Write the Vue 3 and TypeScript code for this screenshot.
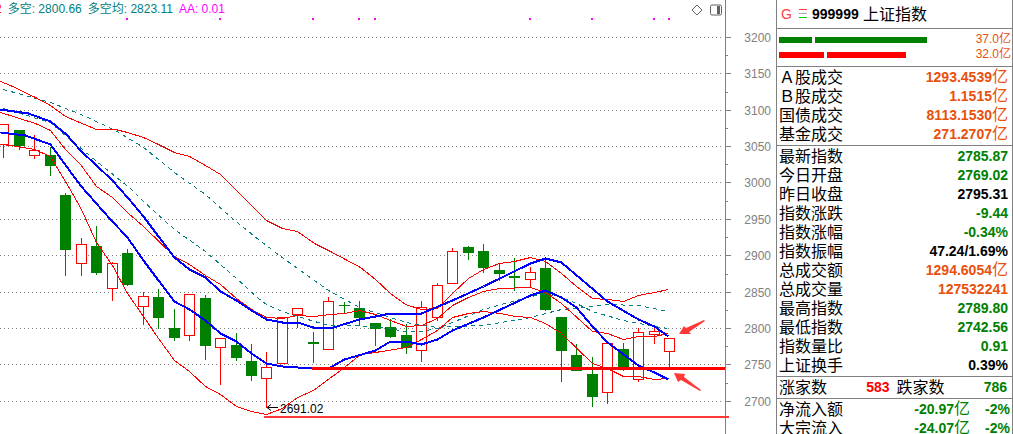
<script setup lang="ts">
type Tone = 'up' | 'down' | 'flat' | 'amount'

interface Quote {
  label: string
  value: string
  unit?: string
  tone: Tone
}

interface Candle {
  x: number
  high: number
  top: number
  bottom: number
  low: number
  rising: boolean
}

const priceTicks = [
  { y: 37, price: 3200 },
  { y: 73, price: 3150 },
  { y: 110, price: 3100 },
  { y: 146, price: 3050 },
  { y: 182, price: 3000 },
  { y: 219, price: 2950 },
  { y: 255, price: 2900 },
  { y: 292, price: 2850 },
  { y: 328, price: 2800 },
  { y: 364, price: 2750 },
  { y: 401, price: 2700 },
]
const minorTicks = [55, 92, 128, 164, 201, 237, 274, 310, 346, 383]
const signalMarks = [126, 219, 312, 358, 374, 529, 591, 653, 668]

const candleRows: [number, number, number, number, number, number][] = [
  [3, 124, 124, 144, 157, 1],
  [19, 130, 130, 145, 149, 0],
  [34, 135, 150, 155, 158, 1],
  [50, 147, 155, 165, 175, 0],
  [65, 193, 195, 249, 275, 0],
  [81, 238, 244, 263, 275, 1],
  [96, 226, 246, 272, 274, 0],
  [112, 262, 263, 288, 300, 1],
  [127, 249, 253, 284, 285, 0],
  [143, 292, 296, 306, 324, 1],
  [158, 289, 297, 317, 328, 0],
  [174, 309, 328, 337, 340, 0],
  [189, 294, 294, 335, 340, 1],
  [205, 295, 298, 345, 359, 0],
  [220, 338, 338, 347, 384, 1],
  [236, 333, 345, 357, 360, 0],
  [251, 344, 361, 375, 380, 0],
  [266, 352, 367, 378, 407, 1],
  [282, 317, 317, 363, 363, 1],
  [297, 308, 308, 314, 327, 1],
  [313, 332, 342, 343, 362, 0],
  [328, 297, 301, 349, 349, 1],
  [344, 302, 305, 305, 312, 0],
  [359, 301, 308, 317, 325, 0],
  [375, 323, 323, 328, 345, 0],
  [390, 319, 327, 336, 337, 0],
  [406, 324, 335, 347, 353, 0],
  [421, 301, 307, 350, 361, 1],
  [437, 283, 285, 317, 320, 1],
  [452, 248, 251, 283, 283, 1],
  [468, 246, 247, 252, 259, 0],
  [483, 244, 251, 267, 272, 0],
  [499, 264, 270, 273, 280, 0],
  [514, 258, 276, 277, 290, 0],
  [530, 267, 272, 279, 287, 1],
  [545, 258, 268, 309, 310, 0],
  [561, 317, 317, 350, 381, 0],
  [576, 344, 355, 370, 370, 0],
  [592, 357, 374, 396, 406, 0],
  [607, 343, 343, 392, 403, 1],
  [623, 343, 349, 367, 370, 0],
  [638, 328, 332, 379, 381, 1],
  [654, 328, 331, 334, 343, 1],
  [669, 338, 338, 351, 367, 1],
]
const candles: Candle[] = candleRows.map(([x, high, top, bottom, low, r]) => ({
  x,
  high,
  top,
  bottom,
  low,
  rising: r === 1,
}))

const bands = {
  upper:
    '0,81 10,85 35,97 50,105 65,116 96,129 115,129 127,132 143,137 158,144 174,152 189,156 205,165 220,174 236,190 251,205 259,213 266,220 282,228 297,231 314,243 330,251 360,267 375,279 390,293 405,304 421,309 437,308 452,293 468,278 483,269 499,263 514,261 530,257 545,261 561,273 576,286 592,298 607,299 623,301 638,295 654,292 668,289',
  middle:
    '0,112 35,123 50,130 65,149 80,164 96,186 112,197 128,213 143,226 174,256 189,264 205,275 220,284 236,298 251,309 266,317 282,318 297,315 313,316 330,314 344,313 359,310 375,314 390,320 406,326 421,325 437,318 452,305 468,297 483,291 499,288 530,287 545,292 561,303 592,331 607,333 623,339 638,336 654,336 668,333',
  lower:
    '0,144 10,145 34,149 50,156 65,181 80,207 96,242 112,265 127,293 143,316 158,338 174,360 189,371 205,386 220,394 236,406 251,411 266,414 282,408 297,397 313,390 344,367 360,354 375,352 406,347 421,339 437,330 452,317 468,313 483,311 500,313 515,316 530,317 545,323 561,333 592,363 607,368 623,376 638,376 654,379 668,378',
}
const trends = {
  fast: '0,109 28,113 50,121 66,134 80,150 112,180 128,198 143,216 158,236 174,257 189,269 205,277 220,291 236,300 251,310 266,319 282,322 297,322 313,327 333,327 359,319 375,316 390,313 421,313 452,300 483,286 530,263 545,258 561,262 607,301 638,319 654,326 668,336',
  slow: '0,132 25,135 50,144 80,185 110,219 127,237 143,260 158,280 174,301 189,309 205,320 220,333 236,341 251,353 266,363 282,366 313,368 330,367 344,359 375,350 390,341 406,341 421,344 437,339 452,330 483,317 530,295 545,290 561,297 576,307 592,326 607,342 638,365 654,372 668,379',
}
const averages = {
  long: '3,89 50,102 83,115 115,130 143,147 174,172 205,194 233,219 258,239 283,258 328,290 359,307 390,317 406,322 421,325 437,327 452,326 483,325 530,317 545,313 561,309 592,306 607,304 638,305 668,311',
  short:
    '3,108 50,122 66,136 100,164 130,188 143,201 174,229 205,251 236,278 258,298 266,304 282,311 297,316 328,325 350,325 375,326 406,331 421,331 437,328 452,322 483,309 530,296 545,294 561,297 576,303 592,311 623,320 654,326 668,328',
}

const flows = [
  { name: '买入', side: 'sell', parts: [8.25, 28], total: '37.0亿' },
  { name: '卖出', side: 'buy', parts: [11.25, 19.75], total: '32.0亿' },
]
const flowScale = 49

const turnover: Quote[] = [
  { label: 'Ａ股成交', value: '1293.4539', unit: '亿', tone: 'amount' },
  { label: 'Ｂ股成交', value: '1.1515', unit: '亿', tone: 'amount' },
  { label: '国债成交', value: '8113.1530', unit: '亿', tone: 'amount' },
  { label: '基金成交', value: '271.2707', unit: '亿', tone: 'amount' },
]
const quotes: Quote[] = [
  { label: '最新指数', value: '2785.87', tone: 'down' },
  { label: '今日开盘', value: '2769.02', tone: 'down' },
  { label: '昨日收盘', value: '2795.31', tone: 'flat' },
  { label: '指数涨跌', value: '-9.44', tone: 'down' },
  { label: '指数涨幅', value: '-0.34%', tone: 'down' },
  { label: '指数振幅', value: '47.24/1.69%', tone: 'flat' },
  { label: '总成交额', value: '1294.6054', unit: '亿', tone: 'amount' },
  { label: '总成交量', value: '127532241', tone: 'amount' },
  { label: '最高指数', value: '2789.80', tone: 'down' },
  { label: '最低指数', value: '2742.56', tone: 'down' },
  { label: '指数量比', value: '0.91', tone: 'down' },
  { label: '上证换手', value: '0.39%', tone: 'flat' },
]
const inflows = [
  { label: '净流入额', value: '-20.97', share: '-2%' },
  { label: '大宗流入', value: '-24.07', share: '-2%' },
]
</script>

<template>
  <main class="terminal">
    <section class="chart">
      <header class="legend">
        <span class="legend-cut">2</span>
        <span class="legend-teal">多空: 2800.66</span>
        <span class="legend-teal">多空均: 2823.11</span>
        <span class="legend-pink">AA: 0.01</span>
        <span class="tools">
          <button type="button" class="tool" title="标记">
            <svg width="12" height="12" viewBox="0 0 12 12">
              <path d="M6 1 11 6 6 11 1 6Z" fill="none" stroke="#666" />
            </svg>
          </button>
          <button type="button" class="tool" title="侧栏">
            <svg width="12" height="12" viewBox="0 0 12 12">
              <rect x="0.5" y="1" width="11" height="10" rx="1.5" fill="none" stroke="#606060" />
              <rect x="7" y="2" width="3" height="8" fill="#606060" />
            </svg>
          </button>
        </span>
      </header>

      <svg class="plot" viewBox="0 0 776 434" role="img" aria-label="上证指数 K线">
        <g class="crisp">
          <line v-for="t in priceTicks" :key="t.y" class="grid" x1="0" x2="724" :y1="t.y + 0.5" :y2="t.y + 0.5" />
          <rect v-for="x in signalMarks" :key="x" class="mark" :x="x" y="18" width="2" height="2" />
        </g>

        <g v-for="c in candles" :key="c.x" class="crisp" :class="c.rising ? 'rise' : 'fall'">
          <rect class="wick" :x="c.x" :y="c.high" width="1" :height="c.low - c.high + 1" />
          <rect v-if="c.rising" class="body" :x="c.x - 4.5" :y="c.top + 0.5" width="10" :height="c.bottom - c.top" />
          <rect v-else class="body" :x="c.x - 5" :y="c.top" width="11" :height="c.bottom - c.top + 1" />
        </g>

        <g class="crisp" transform="translate(0.5 0.5)">
          <polyline v-for="(p, k) in averages" :key="k" class="average" :points="p" />
          <polyline v-for="(p, k) in bands" :key="k" class="band" :points="p" />
          <polyline v-for="(p, k) in trends" :key="k" class="trend" :points="p" />
        </g>

        <g class="crisp">
          <line class="axis" x1="725.5" x2="725.5" y1="0" y2="434" />
          <line v-for="t in priceTicks" :key="t.y" class="axis" x1="726" x2="731" :y1="t.y + 0.5" :y2="t.y + 0.5" />
          <line v-for="y in minorTicks" :key="y" class="axis" x1="726" x2="728" :y1="y + 0.5" :y2="y + 0.5" />
          <rect class="support" x="312" y="367" width="413" height="3" />
          <rect class="floor" x="264" y="416" width="465" height="2" />
        </g>

        <text v-for="t in priceTicks" :key="t.y" class="price" x="771" :y="t.y + 5">{{ t.price }}</text>

        <path class="pointer" d="M278 407.5H267M271 404.5 267 407.5 271 410.5" />
        <text class="low-label" x="280" y="413">2691.02</text>

        <polygon class="arrow" points="679,334 684,326 686,328 704,320 705,321 689,332 691,334" />
        <polygon class="arrow" points="674,373 685,374 684,377 701,390 700,391 681,380 678,382" />
      </svg>
    </section>

    <aside class="panel">
      <h1 class="title">
        <span class="flag">G</span>
        <svg class="menu" width="8" height="10" viewBox="0 0 8 10">
          <rect width="8" height="1" y="0" fill="#ff4040" />
          <rect width="8" height="1" y="4" fill="#b0b0b0" />
          <rect width="8" height="1" y="8" fill="#00d000" />
        </svg>
        <span class="code">999999</span>
        <span>上证指数</span>
      </h1>

      <div class="flows">
        <div v-for="f in flows" :key="f.name" class="flow" :class="f.side">
          <div class="track">
            <span v-for="(p, i) in f.parts" :key="i" class="bar" :style="{ width: (p / flowScale) * 100 + '%' }"></span>
          </div>
          <span class="total">{{ f.total }}</span>
        </div>
      </div>

      <table class="block">
        <tbody>
          <tr v-for="q in turnover" :key="q.label">
            <th scope="row">{{ q.label }}</th>
            <td :class="q.tone">{{ q.value }}<span class="unit">{{ q.unit }}</span></td>
          </tr>
        </tbody>
      </table>

      <table class="block">
        <tbody>
          <tr v-for="q in quotes" :key="q.label">
            <th scope="row">{{ q.label }}</th>
            <td :class="q.tone">{{ q.value }}<span v-if="q.unit" class="unit">{{ q.unit }}</span></td>
          </tr>
        </tbody>
      </table>

      <dl class="breadth">
        <dt>涨家数</dt>
        <dd class="up">583</dd>
        <dt>跌家数</dt>
        <dd class="down">786</dd>
      </dl>

      <table class="block last">
        <tbody>
          <tr v-for="r in inflows" :key="r.label">
            <th scope="row">{{ r.label }}</th>
            <td class="down">{{ r.value }}<span class="unit">亿</span></td>
            <td class="down share">{{ r.share }}</td>
          </tr>
        </tbody>
      </table>
    </aside>
  </main>
</template>

<style>
body {
  margin: 0;
  background: #fff;
}
</style>

<style scoped>
.terminal {
  display: grid;
  grid-template-columns: minmax(0, 1fr) 237px;
  height: 100vh;
  overflow: hidden;
  background: #fff;
  color: #000;
  font-family: 'Liberation Sans', 'Noto Sans CJK SC', sans-serif;
}
.chart {
  display: grid;
  align-content: start;
  overflow: hidden;
}
.legend,
.plot {
  grid-area: 1 / 1;
}
.legend {
  z-index: 1;
  display: flex;
  align-items: center;
  gap: 6px;
  height: 19px;
  margin-left: -5px;
  padding-right: 54px;
  font-size: 12px;
  line-height: 19px;
  white-space: nowrap;
}
.legend-cut {
  color: #f00;
}
.legend-teal {
  color: #008080;
}
.legend-pink {
  color: #f0f;
}
.tools {
  display: flex;
  gap: 7px;
  margin-left: auto;
}
.tool {
  display: block;
  padding: 0;
  border: 0;
  background: none;
}
.tool svg {
  display: block;
}
.plot {
  display: block;
  width: 100%;
  height: auto;
}
.crisp {
  shape-rendering: crispEdges;
}
.grid {
  stroke: #808080;
  stroke-dasharray: 1 3;
}
.mark {
  fill: #f0f;
}
.rise .wick {
  fill: #f00;
}
.rise .body {
  fill: #fff;
  stroke: #f00;
}
.fall .wick,
.fall .body {
  fill: #008000;
}
.average,
.band,
.trend {
  fill: none;
}
.average {
  stroke: #008080;
  stroke-dasharray: 4 4;
}
.band {
  stroke: #f00;
}
.trend {
  stroke: #00f;
  stroke-width: 2;
}
.axis {
  stroke: #808080;
}
.support {
  fill: #f00;
}
.floor,
.arrow {
  fill: #ff3838;
}
.price {
  fill: #808080;
  font-size: 12px;
  text-anchor: end;
}
.pointer {
  fill: none;
  stroke: #000;
}
.low-label {
  fill: #000;
  font-size: 12px;
}
.panel {
  overflow: hidden;
  border: solid #808080;
  border-width: 0 1px;
  font-size: 16px;
  line-height: 19px;
}
.title {
  display: flex;
  align-items: center;
  height: 28px;
  margin: 0;
  padding-left: 4px;
  border-bottom: 1px solid #808080;
  font-size: 16px;
  font-weight: 400;
}
.flag {
  width: 18px;
  color: #ff4040;
  font-size: 14px;
}
.menu {
  margin-right: 5px;
}
.code {
  width: 51px;
  font-size: 14px;
  font-weight: 700;
}
.flows {
  padding: 3px 1px 4px 2px;
  border-bottom: 1px solid #808080;
}
.flow {
  display: flex;
  align-items: center;
  height: 15px;
}
.track {
  display: flex;
  flex: 1;
  gap: 3px;
}
.bar {
  height: 6px;
}
.sell .bar {
  background: #008000;
}
.buy .bar {
  background: #f00;
}
.total {
  width: 36px;
  color: #e8500c;
  font-size: 12px;
  line-height: 15px;
  text-align: right;
}
.block {
  width: 100%;
  padding: 1px 4px 1px 2px;
  border-bottom: 1px solid #808080;
  border-spacing: 0;
}
.block.last {
  padding-right: 2px;
  border-bottom: 0;
}
.block tr {
  height: 19px;
}
.block th,
.block td {
  height: 19px;
  padding: 0;
  line-height: 19px;
  white-space: nowrap;
}
.block th {
  font-weight: 400;
  text-align: left;
}
.block td {
  font-size: 14px;
  font-weight: 700;
  text-align: right;
}
.unit {
  font-size: 16px;
  font-weight: 400;
  line-height: 16px;
}
.block .share {
  width: 40px;
}
.breadth {
  display: flex;
  align-items: center;
  height: 21px;
  margin: 0;
  padding: 0 5px 0 2px;
  border-bottom: 1px solid #808080;
}
.breadth dt {
  width: 48px;
}
.breadth dd {
  flex: 1;
  margin: 0;
  padding-right: 7px;
  font-size: 14px;
  font-weight: 700;
  text-align: right;
}
.breadth dd:last-child {
  padding-right: 0;
}
.up {
  color: #f00;
}
.down {
  color: #008000;
}
.flat {
  color: #000;
}
.amount {
  color: #e8500c;
}
</style>
